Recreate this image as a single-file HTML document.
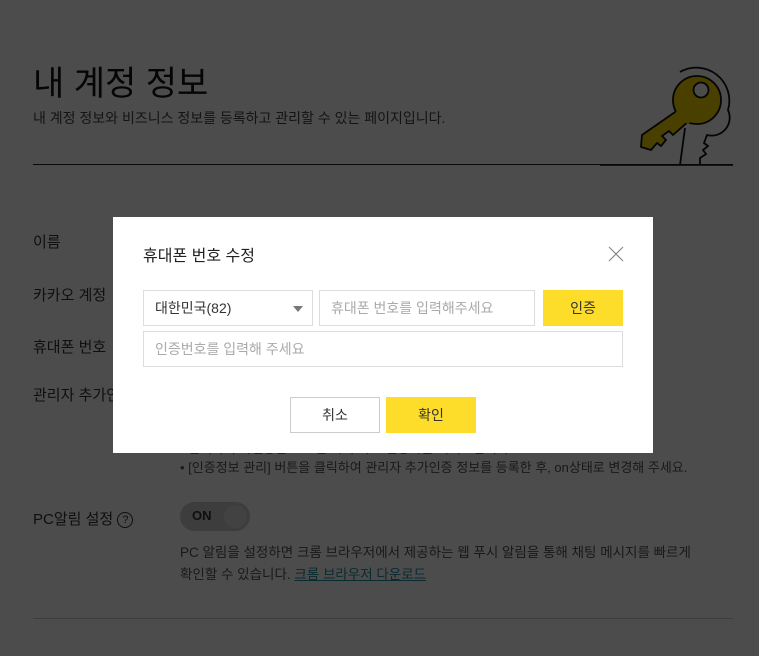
<!DOCTYPE html>
<html><head><meta charset="utf-8"><style>
*{margin:0;padding:0;box-sizing:border-box}
body{width:759px;height:656px;overflow:hidden;background:#fff;font-family:"Liberation Sans","Noto Sans CJK KR",sans-serif;color:#333;position:relative}
.a{position:absolute;white-space:nowrap}
.ov{position:absolute;left:0;top:0;width:759px;height:656px;background:rgba(0,0,0,0.7)}
.dlg{position:absolute;left:113px;top:217px;width:540px;height:236px;background:#fff}
.box{position:absolute;border:1px solid #ddd;background:#fff;font-size:14px;color:#aaa;padding-left:11px;display:flex;align-items:center}
.btn{position:absolute;display:flex;align-items:center;justify-content:center;font-size:14px;color:#333}
</style></head><body>
<div class="a" style="left:33px;top:56px;font-size:34px;color:#111">내 계정 정보</div>
<div class="a" style="left:33px;top:108px;font-size:14px;color:#444">내 계정 정보와 비즈니스 정보를 등록하고 관리할 수 있는 페이지입니다.</div>
<div class="a" style="left:33px;top:164px;width:700px;height:1px;background:#222"></div>
<svg class="a" style="left:600px;top:40px" width="159" height="140" viewBox="0 0 159 140">
<path d="M80 32 A33 33 0 0 1 128 70 A18 18 0 0 1 107 95 L104 103 108 106 103 110 106 114 100 118 L100 125" fill="none" stroke="#111" stroke-width="1.8"/>
<path d="M85 88 L80 125" fill="none" stroke="#111" stroke-width="1.8"/>
<path d="M78 70 L42 95 L41 107 L51 110 L57 103 L61 106 L66 100 L62 96 L69 91 L73 95 L90 80 Z" fill="#f5d800" stroke="#111" stroke-width="1.8" stroke-linejoin="round"/>
<circle cx="97" cy="60" r="24" fill="#f5d800" stroke="#111" stroke-width="1.8"/>
<path d="M76 72 L90 82" stroke="#f5d800" stroke-width="6"/>
<circle cx="101" cy="50" r="7.5" fill="#fff" stroke="#111" stroke-width="1.8"/>
<line x1="0" y1="125" x2="133" y2="125" stroke="#111" stroke-width="1.5"/>
</svg>
<div class="a" style="left:33px;top:231px;font-size:15px">이름</div>
<div class="a" style="left:33px;top:284px;font-size:15px">카카오 계정</div>
<div class="a" style="left:33px;top:336px;font-size:15px">휴대폰 번호</div>
<div class="a" style="left:33px;top:384px;font-size:15px">관리자 추가인증</div>
<div class="a" style="left:180px;top:419px;font-size:13px;color:#555">• 관리자 추가인증을 사용하여 계정을 더욱 안전하게 보호해 보세요.</div>
<div class="a" style="left:180px;top:438px;font-size:13px;color:#555">• 관리자 추가인증은 로그인 시 추가로 인증하는 서비스입니다.</div>
<div class="a" style="left:180px;top:457px;font-size:13px;color:#555">• [인증정보 관리] 버튼을 클릭하여 관리자 추가인증 정보를 등록한 후, on상태로 변경해 주세요.</div>
<div class="a" style="left:33px;top:508px;font-size:15px">PC알림 설정 <span style="display:inline-block;width:16px;height:16px;border:1px solid #333;border-radius:50%;font-size:11px;text-align:center;line-height:14px;vertical-align:1px">?</span></div>
<div class="a" style="left:180px;top:502px;width:70px;height:29px;border-radius:15px;background:#ccc"><span style="position:absolute;left:12px;top:6px;font-size:13px;font-weight:bold;color:#333">ON</span><span style="position:absolute;right:3px;top:3px;width:23px;height:23px;border-radius:50%;background:#ddd"></span></div>
<div class="a" style="left:180px;top:541px;font-size:13.5px;color:#555">PC 알림을 설정하면 크롬 브라우저에서 제공하는 웹 푸시 알림을 통해 채팅 메시지를 빠르게</div>
<div class="a" style="left:180px;top:563px;font-size:13.5px;color:#555">확인할 수 있습니다. <span style="color:#1f8f9f;text-decoration:underline">크롬 브라우저 다운로드</span></div>
<div class="a" style="left:33px;top:618px;width:700px;height:1px;background:#ccc"></div>
<div class="ov"></div>
<div class="dlg">
<div class="a" style="left:30px;top:25px;font-size:16px;color:#222">휴대폰 번호 수정</div>
<svg class="a" style="left:495px;top:29px" width="16" height="16"><path d="M1 1L15 15M15 1L1 15" stroke="#888" stroke-width="1.2"/></svg>
<div class="box" style="left:30px;top:73px;width:170px;height:36px;color:#333">대한민국(82)<span style="position:absolute;right:9px;top:15px;border-left:5px solid transparent;border-right:5px solid transparent;border-top:6px solid #777"></span></div>
<div class="box" style="left:206px;top:73px;width:216px;height:36px">휴대폰 번호를 입력해주세요</div>
<div class="btn" style="left:430px;top:73px;width:80px;height:36px;background:#fddc2a">인증</div>
<div class="box" style="left:30px;top:114px;width:480px;height:36px">인증번호를 입력해 주세요</div>
<div class="btn" style="left:177px;top:180px;width:90px;height:36px;border:1px solid #ccc">취소</div>
<div class="btn" style="left:273px;top:180px;width:90px;height:36px;background:#fddc2a">확인</div>
</div>
</body></html>
